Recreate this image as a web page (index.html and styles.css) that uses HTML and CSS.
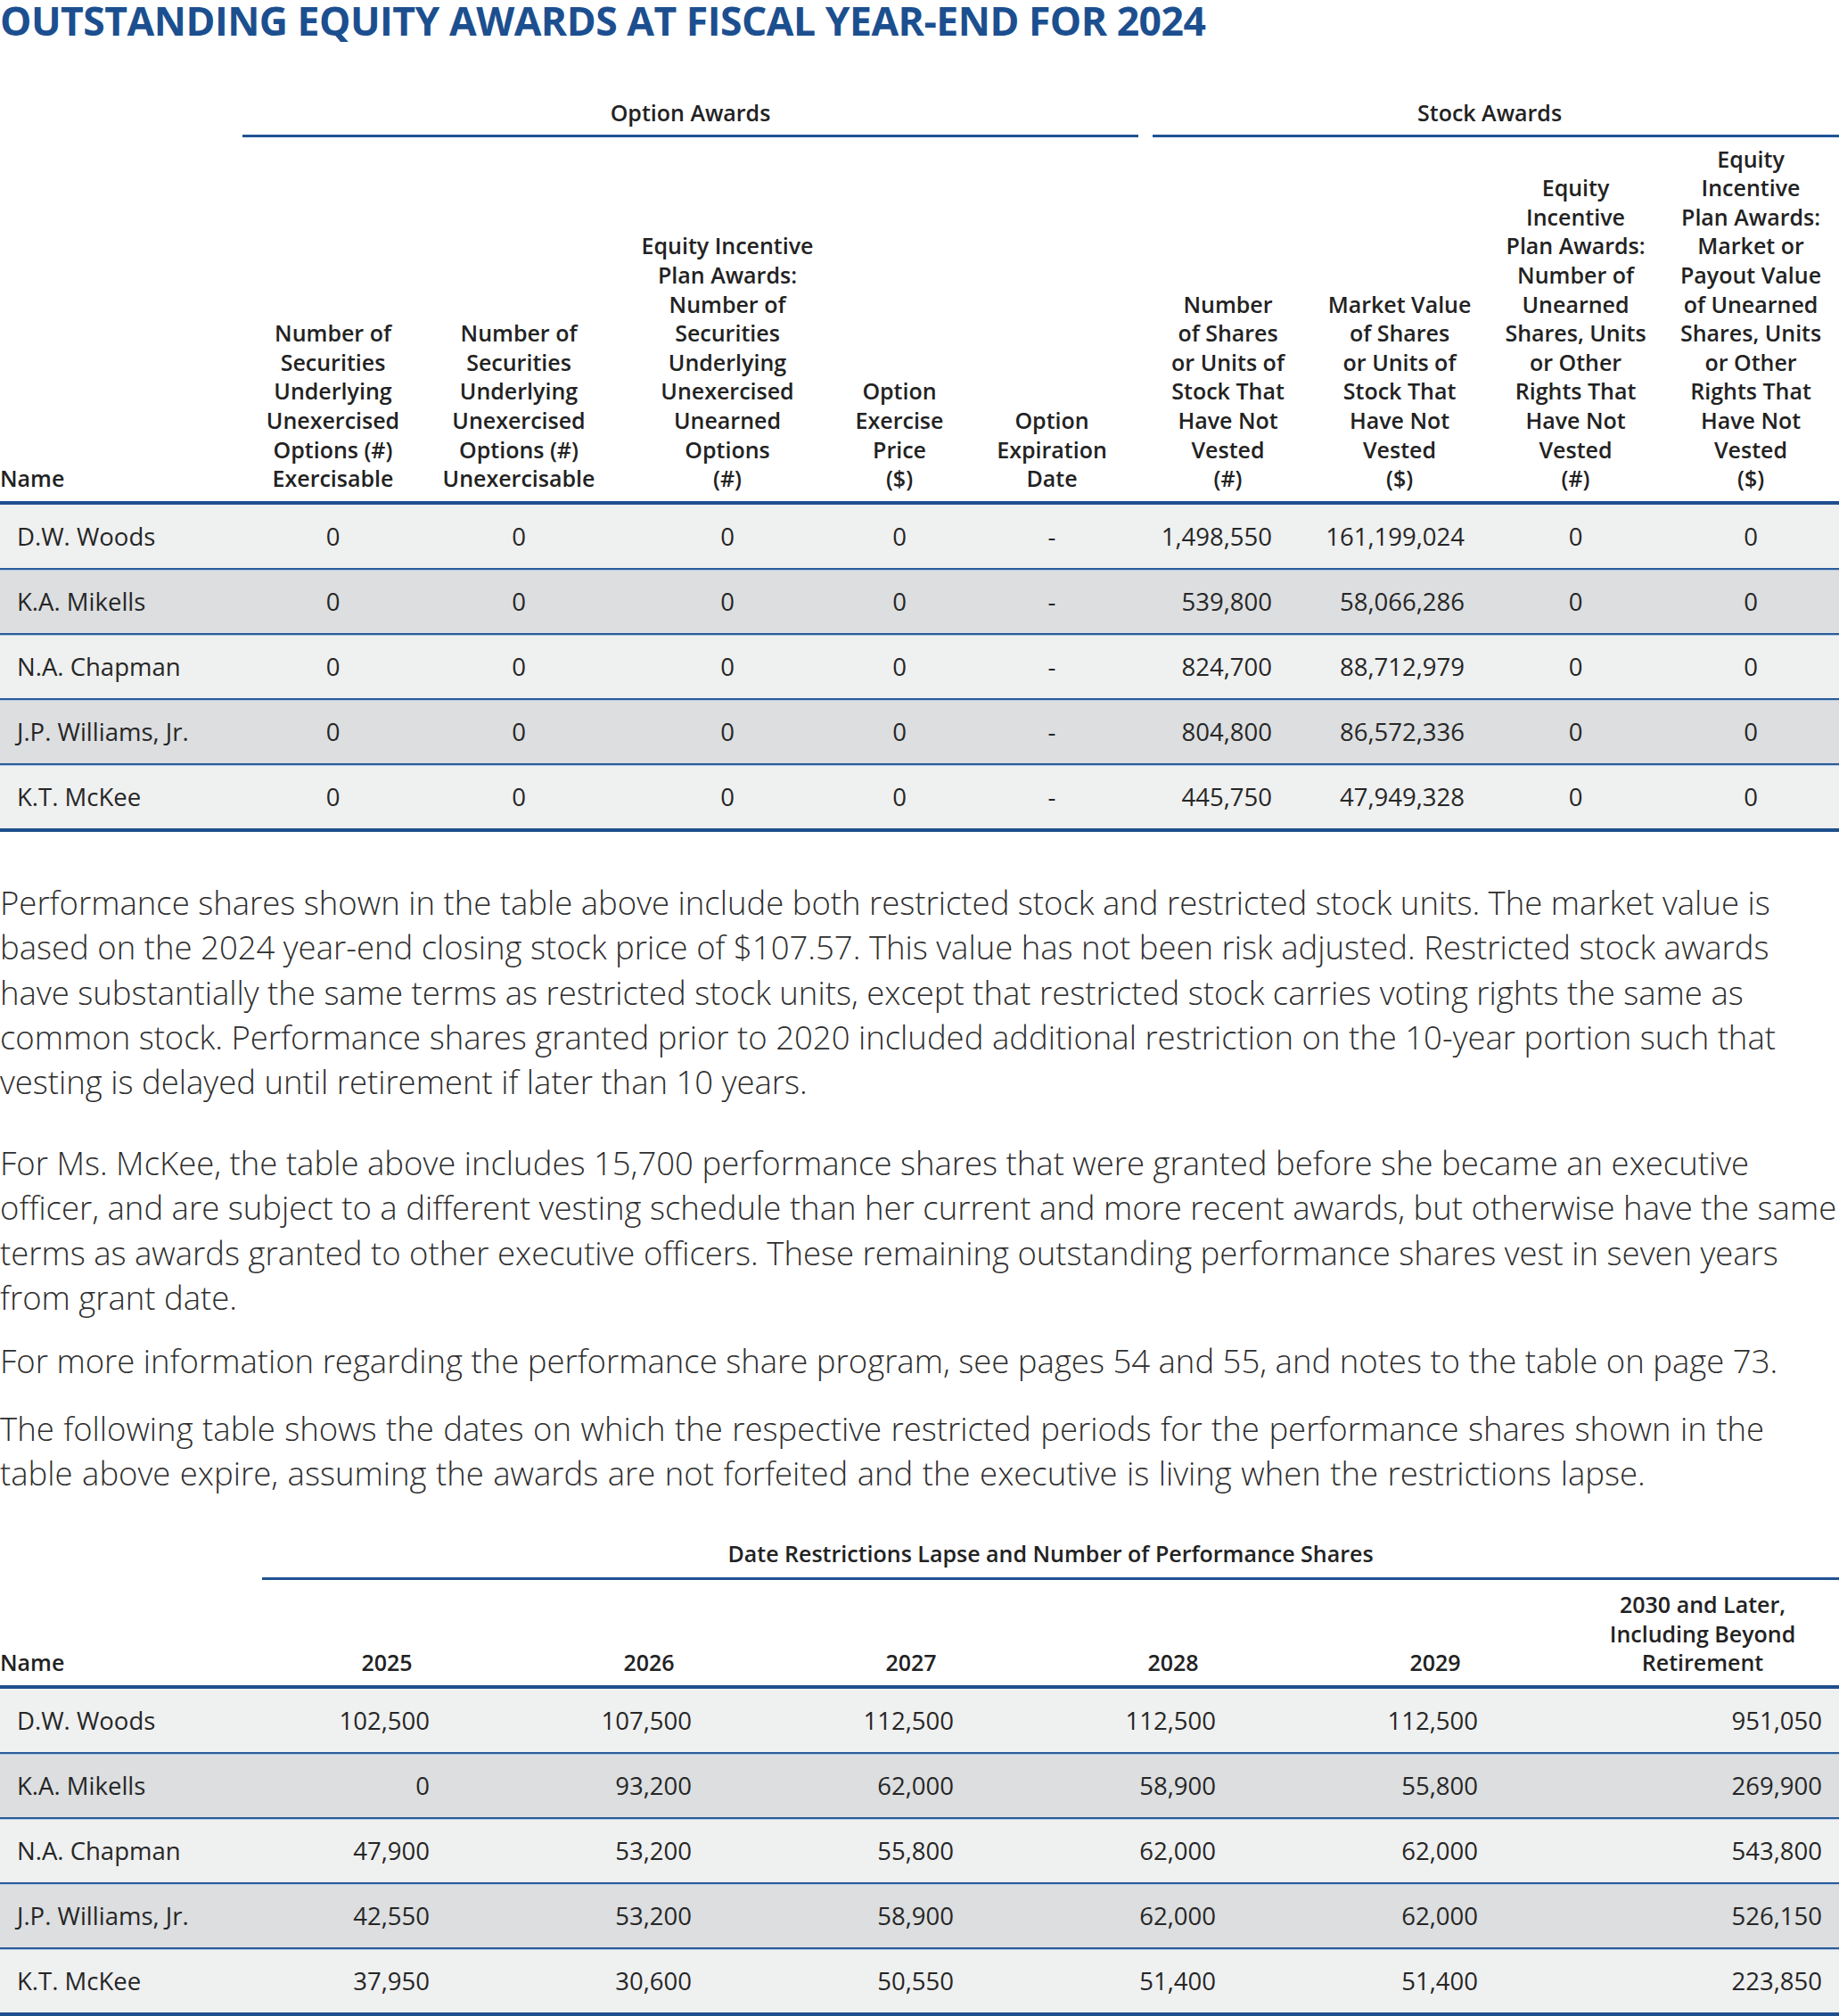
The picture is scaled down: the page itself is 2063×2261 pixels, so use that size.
FILE: index.html
```html
<!DOCTYPE html>
<html>
<head>
<meta charset="utf-8">
<link rel="stylesheet" href="styles.css">
</head>
<body>
<h1 class="title">OUTSTANDING EQUITY AWARDS AT FISCAL YEAR-END FOR 2024</h1>

<table class="awards t1">
  <colgroup>
    <col style="width:272px"><col style="width:203px"><col style="width:214px"><col style="width:254px"><col style="width:132px"><col style="width:210px"><col style="width:185px"><col style="width:200px"><col style="width:195px"><col style="width:198px">
  </colgroup>
  <thead>
    <tr class="group">
      <th></th>
      <th colspan="5"><div class="grp grp-left">Option Awards</div></th>
      <th colspan="4"><div class="grp grp-right">Stock Awards</div></th>
    </tr>
    <tr class="cols">
      <th class="name">Name</th>
      <th>Number of<br>Securities<br>Underlying<br>Unexercised<br>Options (#)<br>Exercisable</th>
      <th>Number of<br>Securities<br>Underlying<br>Unexercised<br>Options (#)<br>Unexercisable</th>
      <th>Equity Incentive<br>Plan Awards:<br>Number of<br>Securities<br>Underlying<br>Unexercised<br>Unearned<br>Options<br>(#)</th>
      <th>Option<br>Exercise<br>Price<br>($)</th>
      <th>Option<br>Expiration<br>Date</th>
      <th>Number<br>of Shares<br>or Units of<br>Stock That<br>Have Not<br>Vested<br>(#)</th>
      <th>Market Value<br>of Shares<br>or Units of<br>Stock That<br>Have Not<br>Vested<br>($)</th>
      <th>Equity<br>Incentive<br>Plan Awards:<br>Number of<br>Unearned<br>Shares, Units<br>or Other<br>Rights That<br>Have Not<br>Vested<br>(#)</th>
      <th>Equity<br>Incentive<br>Plan Awards:<br>Market or<br>Payout Value<br>of Unearned<br>Shares, Units<br>or Other<br>Rights That<br>Have Not<br>Vested<br>($)</th>
    </tr>
  </thead>
  <tbody>
    <tr class="light"><td class="name">D.W. Woods</td><td>0</td><td>0</td><td>0</td><td>0</td><td>-</td><td class="num n6">1,498,550</td><td class="num n7">161,199,024</td><td>0</td><td>0</td></tr>
    <tr class="dark"><td class="name">K.A. Mikells</td><td>0</td><td>0</td><td>0</td><td>0</td><td>-</td><td class="num n6">539,800</td><td class="num n7">58,066,286</td><td>0</td><td>0</td></tr>
    <tr class="light"><td class="name">N.A. Chapman</td><td>0</td><td>0</td><td>0</td><td>0</td><td>-</td><td class="num n6">824,700</td><td class="num n7">88,712,979</td><td>0</td><td>0</td></tr>
    <tr class="dark"><td class="name">J.P. Williams, Jr.</td><td>0</td><td>0</td><td>0</td><td>0</td><td>-</td><td class="num n6">804,800</td><td class="num n7">86,572,336</td><td>0</td><td>0</td></tr>
    <tr class="light last"><td class="name">K.T. McKee</td><td>0</td><td>0</td><td>0</td><td>0</td><td>-</td><td class="num n6">445,750</td><td class="num n7">47,949,328</td><td>0</td><td>0</td></tr>
  </tbody>
</table>

<p class="body-text p1">Performance shares shown in the table above include both restricted stock and restricted stock units. The market value is based on the 2024 year-end closing stock price of $107.57. This value has not been risk adjusted. Restricted stock awards have substantially the same terms as restricted stock units, except that restricted stock carries voting rights the same as common stock. Performance shares granted prior to 2020 included additional restriction on the 10-year portion such that vesting is delayed until retirement if later than 10 years.</p>
<p class="body-text p2">For Ms. McKee, the table above includes 15,700 performance shares that were granted before she became an executive officer, and are subject to a different vesting schedule than her current and more recent awards, but otherwise have the same terms as awards granted to other executive officers. These remaining outstanding performance shares vest in seven years from grant date.</p>
<p class="body-text p3">For more information regarding the performance share program, see pages 54 and 55, and notes to the table on page 73.</p>
<p class="body-text p4">The following table shows the dates on which the respective restricted periods for the performance shares shown in the table above expire, assuming the awards are not forfeited and the executive is living when the restrictions lapse.</p>

<table class="awards t2">
  <colgroup>
    <col style="width:287px"><col style="width:294px"><col style="width:294px"><col style="width:294px"><col style="width:294px"><col style="width:294px"><col style="width:306px">
  </colgroup>
  <thead>
    <tr class="group">
      <th></th>
      <th colspan="6"><div class="grp grp-wide">Date Restrictions Lapse and Number of Performance Shares</div></th>
    </tr>
    <tr class="cols">
      <th class="name">Name</th>
      <th>2025</th><th>2026</th><th>2027</th><th>2028</th><th>2029</th>
      <th>2030 and Later,<br>Including Beyond<br>Retirement</th>
    </tr>
  </thead>
  <tbody>
    <tr class="light"><td class="name">D.W. Woods</td><td class="yr">102,500</td><td class="yr">107,500</td><td class="yr">112,500</td><td class="yr">112,500</td><td class="yr">112,500</td><td class="yr-last">951,050</td></tr>
    <tr class="dark"><td class="name">K.A. Mikells</td><td class="yr">0</td><td class="yr">93,200</td><td class="yr">62,000</td><td class="yr">58,900</td><td class="yr">55,800</td><td class="yr-last">269,900</td></tr>
    <tr class="light"><td class="name">N.A. Chapman</td><td class="yr">47,900</td><td class="yr">53,200</td><td class="yr">55,800</td><td class="yr">62,000</td><td class="yr">62,000</td><td class="yr-last">543,800</td></tr>
    <tr class="dark"><td class="name">J.P. Williams, Jr.</td><td class="yr">42,550</td><td class="yr">53,200</td><td class="yr">58,900</td><td class="yr">62,000</td><td class="yr">62,000</td><td class="yr-last">526,150</td></tr>
    <tr class="light last"><td class="name">K.T. McKee</td><td class="yr">37,950</td><td class="yr">30,600</td><td class="yr">50,550</td><td class="yr">51,400</td><td class="yr">51,400</td><td class="yr-last">223,850</td></tr>
  </tbody>
</table>
</body>
</html>
```
FILE: styles.css
```css
html, body {
  margin: 0;
  padding: 0;
  background: #ffffff;
}
body {
  width: 2063px;
  font-family: "Open Sans", "Noto Sans", "Liberation Sans", sans-serif;
  color: #222222;
}
.title {
  margin: -7px 0 -7px;
  font-size: 44.5px;
  line-height: 60px;
  font-weight: 700;
  color: #1c4f8f;
  letter-spacing: -0.5px;
}
.awards {
  width: 2063px;
  border-collapse: collapse;
  table-layout: fixed;
}
.awards th {
  font-weight: 600;
  font-size: 25px;
  line-height: 32.6px;
  color: #222;
  text-align: center;
  vertical-align: bottom;
  padding: 0;
}
.awards .group th {
  padding: 0;
}
.grp {
  border-bottom: 3px solid #1f5294;
  padding-bottom: 8px;
}
.t1 .group th { padding-top: 64px; }
.grp-left { margin-right: 8px; }
.grp-right { margin-left: 8px; padding-right: 14px; }
.t1 .cols th {
  padding-top: 8px;
  padding-bottom: 9px;
  border-bottom: 4px solid #1e4f8e;
}
.awards th.name { text-align: left; }
.awards td {
  font-size: 27.5px;
  font-weight: 400;
  color: #262626;
  text-align: center;
  height: 71px;
  padding: 0;
  border-bottom: 2px solid #2a5b99;
  box-shadow: inset 0 1px 0 #b3cbe4;
}
.awards tr.last td {
  border-bottom: 4px solid #1e4f8e;
}
.awards tbody tr:first-child td { box-shadow: none; }
.awards td.name {
  text-align: left;
  padding-left: 19px;
}
.light td { background: #eff0f0; }
.dark td { background: #dcdee0; }
.awards td.num { text-align: right; }
.awards td.n6 { padding-right: 43px; }
.awards td.n7 { padding-right: 27px; }

.body-text {
  margin: 0;
  font-size: 36.5px;
  line-height: 50.4px;
  font-weight: 300;
  color: #2e2e2e;
}
.p1 { margin-top: 54px; }
.p2 { margin-top: 40px; }
.p3 { margin-top: 21px; }
.p4 { margin-top: 25px; word-spacing: 1px; }

.t2 .group th { padding-top: 48px; }
.t2 .grp { padding-bottom: 11px; }
.grp-wide { margin-left: 7px; }
.t2 .cols th {
  padding-top: 11px;
  padding-bottom: 9px;
  border-bottom: 4px solid #1e4f8e;
}
.awards td.yr { text-align: right; padding-right: 99px; }
.awards td.yr-last { text-align: right; padding-right: 19px; }
```
